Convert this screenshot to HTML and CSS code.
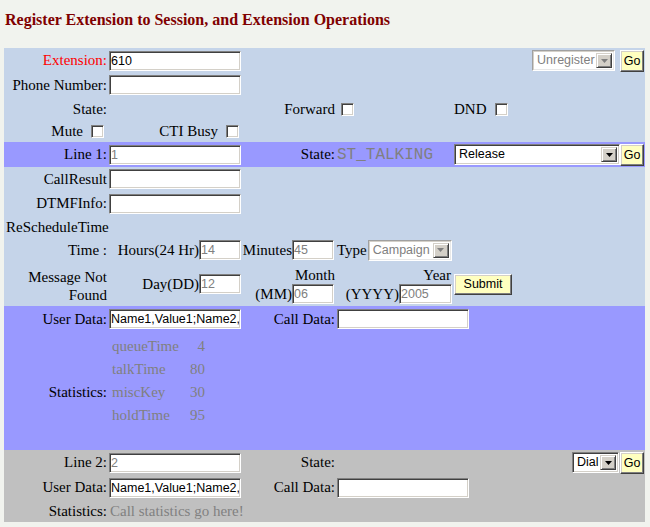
FILE: index.html
```html
<!DOCTYPE html>
<html>
<head>
<meta charset="utf-8">
<title>Extension Operations</title>
<link rel="stylesheet" href="styles.css">
</head>
<body>
<h1 class="title">Register Extension to Session, and Extension Operations</h1>
<form class="panel">
  <!-- extension registration -->
  <div class="band band-blue">
    <div class="row h25">
      <span class="lbl lbl-key">Extension:</span>
      <input class="txt" type="text" value="610">
      <div class="tail">
        <div class="sel sel-off w-unreg"><span class="sel-text">Unregister</span><span class="sel-btn"><svg width="7" height="4" viewBox="0 0 7 4"><polygon points="0,0 7,0 3.5,4"/></svg></span></div>
        <button class="btn btn-go gap-5" type="button">Go</button>
      </div>
    </div>
    <div class="row h24">
      <span class="lbl">Phone Number:</span>
      <input class="txt" type="text" value="">
    </div>
    <div class="row h24">
      <span class="lbl">State:</span>
      <span class="cell-fwd">Forward<input class="chk chk-fwd" type="checkbox"></span>
      <span class="cell-dnd">DND<input class="chk" type="checkbox"></span>
    </div>
    <div class="row h21">
      <span class="lbl flag-a">Mute<input class="chk" type="checkbox"></span>
      <span class="cell-b flag-b">CTI Busy<input class="chk" type="checkbox"></span>
    </div>
  </div>

  <!-- line 1 -->
  <div class="band band-purple">
    <div class="row h25">
      <span class="lbl">Line 1:</span>
      <input class="txt dim" type="text" value="1" readonly>
      <span class="cell-c">State:</span>
      <span class="cell-d state-val">ST_TALKING</span>
      <div class="sel w-release"><span class="sel-text">Release</span><span class="sel-btn"><svg width="7" height="4" viewBox="0 0 7 4"><polygon points="0,0 7,0 3.5,4"/></svg></span></div>
      <button class="btn btn-go" type="button">Go</button>
    </div>
  </div>

  <!-- call result and reschedule -->
  <div class="band band-blue">
    <div class="row h24">
      <span class="lbl">CallResult</span>
      <input class="txt" type="text" value="">
    </div>
    <div class="row h25">
      <span class="lbl">DTMFInfo:</span>
      <input class="txt" type="text" value="">
    </div>
    <div class="row h22">
      <span class="section-head">ReScheduleTime</span>
    </div>
    <div class="row h24">
      <span class="lbl">Time :</span>
      <span class="cell-b">Hours(24 Hr)<input class="txt sm dim" type="text" value="14" readonly></span>
      <span class="cell-c pr3">Minutes<input class="txt sm dim" type="text" value="45" readonly></span>
      <span class="cell-d">Type<div class="sel sel-off w-camp"><span class="sel-text">Campaign</span><span class="sel-btn"><svg width="7" height="4" viewBox="0 0 7 4"><polygon points="0,0 7,0 3.5,4"/></svg></span></div></span>
    </div>
    <div class="row h44">
      <span class="lbl lbl-2l">Message Not<br>Found</span>
      <span class="cell-b">Day(DD)<input class="txt sm dim" type="text" value="12" readonly></span>
      <span class="cell-c stack"><span class="cap">Month</span><span class="pair pair-mm">(MM)<input class="txt sm dim" type="text" value="06" readonly></span></span>
      <span class="cell-d stack stack-year"><span class="cap">Year</span><span class="pair">(YYYY)<input class="txt yr dim" type="text" value="2005" readonly></span></span>
      <button class="btn btn-submit" type="button">Submit</button>
    </div>
  </div>

  <!-- line 1 data -->
  <div class="band band-purple">
    <div class="row h26">
      <span class="lbl">User Data:</span>
      <input class="txt" type="text" value="Name1,Value1;Name2,Value2">
      <span class="cell-c">Call Data:</span>
      <input class="txt" type="text" value="">
    </div>
    <div class="row stats">
      <span class="lbl">Statistics:</span>
      <div class="stat-grid">
        <span>queueTime</span><span class="num">4</span>
        <span>talkTime</span><span class="num">80</span>
        <span>miscKey</span><span class="num">30</span>
        <span>holdTime</span><span class="num">95</span>
      </div>
    </div>
  </div>

  <!-- line 2 -->
  <div class="band band-gray">
    <div class="row h25">
      <span class="lbl">Line 2:</span>
      <input class="txt dim" type="text" value="2" readonly>
      <span class="cell-c">State:</span>
      <div class="tail">
        <div class="sel w-dial"><span class="sel-text">Dial</span><span class="sel-btn"><svg width="7" height="4" viewBox="0 0 7 4"><polygon points="0,0 7,0 3.5,4"/></svg></span></div>
        <button class="btn btn-go gap-1" type="button">Go</button>
      </div>
    </div>
    <div class="row h25">
      <span class="lbl">User Data:</span>
      <input class="txt" type="text" value="Name1,Value1;Name2,Value2">
      <span class="cell-c">Call Data:</span>
      <input class="txt" type="text" value="">
    </div>
    <div class="row h22">
      <span class="lbl">Statistics:</span>
      <span class="note">Call statistics go here!</span>
    </div>
  </div>
</form>
</body>
</html>
```

FILE: styles.css
```css
* {
  box-sizing: border-box;
}

html,
body {
  margin: 0;
}

body {
  background: #f1f3ee;
  padding: 0 5px 5px 4px;
  font-family: "Liberation Serif", "Times New Roman", serif;
  font-size: 15px;
  color: #000;
}

.title {
  margin: 0 0 17px;
  padding: 9px 1px 0;
  font-size: 16px;
  line-height: 22px;
  font-weight: bold;
  color: #800000;
  white-space: nowrap;
}

.panel {
  display: block;
  margin: 0;
}

.band-blue {
  background: #c5d4e9;
}

.band-purple {
  background: #9999ff;
}

.band-gray {
  background: #c0c0c0;
}

.row {
  display: flex;
  align-items: center;
  padding-right: 1px;
  white-space: nowrap;
}

.h21 { height: 21px; }
.h22 { height: 22px; }
.h24 { height: 24px; }
.h25 { height: 25px; }
.h26 { height: 26px; }
.h44 { height: 44px; }

/* label column */
.lbl {
  flex: none;
  width: 105px;
  padding-right: 2px;
  text-align: right;
}

.lbl-key {
  color: #ff0000;
}

.lbl-2l {
  line-height: 18px;
  margin-top: 4px;
}

.section-head {
  padding-left: 2px;
}

/* field columns */
.cell-b {
  flex: none;
  width: 132px;
  display: flex;
  align-items: center;
  justify-content: flex-end;
}

.cell-c {
  flex: none;
  width: 96px;
  padding-right: 2px;
  display: flex;
  align-items: center;
  justify-content: flex-end;
}

.cell-c.pr3 {
  padding-right: 3px;
}

.cell-d {
  flex: none;
  width: 117px;
  display: flex;
  align-items: center;
}

.state-val {
  font-family: "Liberation Mono", "Courier New", monospace;
  font-size: 16px;
  color: #808080;
}

.stack {
  flex-direction: column;
  align-items: flex-end;
  align-self: flex-end;
  margin-bottom: 2px;
}

.cap {
  line-height: 18px;
}

.pair {
  display: flex;
  align-items: center;
}

.pair-mm {
  margin-right: 1px;
}

.stack-year {
  width: 116px;
  padding-right: 1px;
}

.stack-year .cap {
  margin-right: 1px;
}

.tail {
  margin-left: auto;
  display: flex;
  align-items: center;
}

/* checkbox rows */
.cell-fwd {
  flex: none;
  width: 247px;
  padding-right: 2px;
  display: flex;
  align-items: center;
  justify-content: flex-end;
}

.cell-dnd {
  display: flex;
  align-items: center;
  margin-left: 98px;
}

.flag-a {
  display: flex;
  align-items: center;
  justify-content: flex-end;
  padding-right: 5px;
}

.flag-b {
  padding-right: 2px;
}

/* classic sunken text box */
.txt {
  flex: none;
  width: 132px;
  height: 20px;
  margin: 0;
  padding: 0 1px;
  background: #fff;
  border: 1px solid;
  border-color: #808080 #fff #fff #808080;
  box-shadow: inset 1px 1px 0 #404040, inset -1px -1px 0 #d4d0c8;
  font-family: "Liberation Sans", Arial, sans-serif;
  font-size: 12.5px;
  color: #000;
  outline: none;
}

.txt.sm {
  width: 42px;
}

.txt.yr {
  width: 53px;
}

.txt.dim {
  color: #808080;
}

.chk {
  -webkit-appearance: none;
  appearance: none;
  flex: none;
  width: 13px;
  height: 13px;
  margin: 0 0 0 8px;
  background: #fff;
  border: 1px solid;
  border-color: #808080 #fff #fff #808080;
  box-shadow: inset 1px 1px 0 #404040, inset -1px -1px 0 #d4d0c8;
}

.chk-fwd {
  margin-left: 6px;
}

/* drop-down lists */
.sel {
  flex: none;
  display: flex;
  height: 21px;
  padding: 2px;
  background: #fff;
  border: 1px solid;
  border-color: #808080 #fff #fff #808080;
  box-shadow: inset 1px 1px 0 #404040, inset -1px -1px 0 #d4d0c8;
  font-family: "Liberation Sans", Arial, sans-serif;
  font-size: 12.5px;
  color: #000;
}

.sel-text {
  flex: 1;
  padding-left: 2px;
  line-height: 15px;
  overflow: hidden;
}

.sel-btn {
  flex: none;
  width: 16px;
  display: flex;
  align-items: center;
  justify-content: center;
  background: #d4d0c8;
  border: 1px solid;
  border-color: #d4d0c8 #404040 #404040 #d4d0c8;
  box-shadow: inset 1px 1px 0 #fff, inset -1px -1px 0 #808080;
}

.sel-btn svg {
  display: block;
  fill: #000;
}

.sel-off {
  color: #808080;
  border-color: #a0a0a0 #fff #fff #a0a0a0;
  box-shadow: inset 1px 1px 0 #d4d0c8, inset -1px -1px 0 #e8e8e8;
}

.sel-off .sel-btn svg {
  fill: #808080;
}

.w-unreg { width: 83px; }
.w-camp { width: 84px; margin-left: 1px; }
.w-release { width: 166px; }
.w-dial { width: 47px; }

/* raised yellow buttons */
.btn {
  flex: none;
  margin: 0;
  padding: 0;
  background: #ffffc0;
  border: 1px solid;
  border-color: #fff #404040 #404040 #fff;
  box-shadow: inset -1px -1px 0 #808080, inset 1px 1px 0 #d4d0c8;
  font-family: "Liberation Sans", Arial, sans-serif;
  font-size: 12.5px;
  color: #000;
}

.btn-go {
  width: 24px;
  height: 22px;
}

.gap-5 { margin-left: 5px; }
.gap-1 { margin-left: 1px; }

.btn-submit {
  width: 58px;
  height: 21px;
  margin-left: 1px;
}

/* call statistics */
.stats {
  height: 118px;
  padding-top: 3px;
}

.stat-grid {
  margin-left: 3px;
  display: grid;
  grid-template-columns: 64px 29px;
  grid-template-rows: repeat(5, 23px);
  align-items: center;
  color: #808080;
}

.num {
  text-align: right;
}

.note {
  margin-left: 1px;
  color: #808080;
}
```
